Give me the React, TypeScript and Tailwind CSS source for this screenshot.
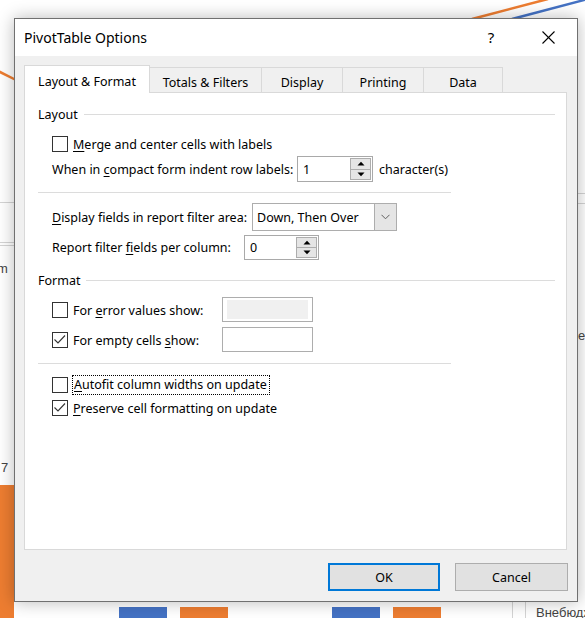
import React from "react";

const FONT = "font-['Noto_Sans',sans-serif]";

function U({ children }: { children: React.ReactNode }) {
  return <span className="underline decoration-1 underline-offset-[2px]">{children}</span>;
}

function Check({ checked }: { checked?: boolean }) {
  return (
    <div className="w-4 h-4 border border-[#333333] bg-white flex items-center justify-center shrink-0">
      {checked && (
        <svg width="14" height="14" viewBox="0 0 14 14">
          <polyline points="1.5,6.5 5,10 12,2.5" fill="none" stroke="#333333" strokeWidth="1.1" />
        </svg>
      )}
    </div>
  );
}

function Tri({ up }: { up?: boolean }) {
  return (
    <svg width="8" height="5" viewBox="0 0 8 5">
      {up ? <polygon points="0.5,4.5 4,0.8 7.5,4.5" fill="#000" /> : <polygon points="0.5,0.5 4,4.2 7.5,0.5" fill="#000" />}
    </svg>
  );
}

function SpinInput({ value, w, h }: { value: string; w: string; h: string }) {
  return (
    <div className={`${w} ${h} border border-[#a9a9a9] bg-white flex items-stretch`}>
      <div className="flex-1 flex items-center pl-[5px] pt-[2px]">{value}</div>
      <div className="w-[22px] flex flex-col py-px pr-px">
        <div className="flex-1 border border-[#adadad] bg-[#e5e5e5] flex items-center justify-center">
          <Tri up />
        </div>
        <div className="flex-1 border border-t-0 border-[#adadad] bg-[#e5e5e5] flex items-center justify-center">
          <Tri />
        </div>
      </div>
    </div>
  );
}

function SectionHeader({ label, mt }: { label: string; mt: string }) {
  return (
    <div className={`${mt} h-[18px] flex items-center`}>
      <span className="pt-[2px]">{label}</span>
      <div className="flex-1 h-px bg-[#dcdcdc] ml-[6px]" />
    </div>
  );
}

export default function App() {
  return (
    <div className={`relative w-[585px] h-[618px] overflow-hidden bg-white ${FONT} text-black`}>
      {/* Excel background fragments */}
      <svg className="absolute inset-0" width="585" height="618" viewBox="0 0 585 618">
        <line x1="472" y1="19" x2="548" y2="-1" stroke="#ed7d31" strokeWidth="2.5" />
        <line x1="512" y1="19" x2="588" y2="-1" stroke="#4472c4" strokeWidth="2.5" />
        <line x1="-2" y1="71" x2="16" y2="80" stroke="#ed7d31" strokeWidth="2.5" />
      </svg>
      <div className="absolute left-0 top-[202px] w-[14px] h-px bg-[#d4d4d4]" />
      <div className="absolute left-0 top-[242px] w-[14px] h-px bg-[#d4d4d4]" />
      <div className="absolute left-0 top-[245px] w-[14px] h-px bg-[#d4d4d4]" />
      <div className="absolute right-0 top-[193px] w-[8px] h-px bg-[#d4d4d4]" />
      <div className="absolute right-0 top-[203px] w-[8px] h-px bg-[#d4d4d4]" />
      <div className="absolute left-[-3px] top-[259px] text-[13px] text-[#444] font-['Liberation_Sans',sans-serif]">m</div>
      <div className="absolute left-[1px] top-[458px] text-[13px] text-[#444] font-['Liberation_Sans',sans-serif]">7</div>
      <div className="absolute left-[578px] top-[326px] text-[13px] text-[#444] font-['Liberation_Sans',sans-serif]">е</div>
      <div className="absolute left-0 top-[485px] w-[14px] h-[133px] bg-[#ed7d31]" />
      <div className="absolute left-[119px] top-[607px] w-[48px] h-[11px] bg-[#4472c4]" />
      <div className="absolute left-[180px] top-[607px] w-[48px] h-[11px] bg-[#ed7d31]" />
      <div className="absolute left-[332px] top-[607px] w-[48px] h-[11px] bg-[#4472c4]" />
      <div className="absolute left-[393px] top-[607px] w-[48px] h-[11px] bg-[#ed7d31]" />
      <div className="absolute left-[512px] top-[600px] w-px h-[18px] bg-[#d4d4d4]" />
      <div className="absolute left-[525px] top-[600px] w-px h-[18px] bg-[#d4d4d4]" />
      <div className="absolute left-[536px] top-[603px] text-[13px] text-[#444] font-['Liberation_Sans',sans-serif] whitespace-nowrap">Внебюджет</div>

      {/* Dialog */}
      <div className="absolute left-[14px] top-[18px] w-[564px] h-[584px] border border-[#707070] bg-[#f0f0f0] shadow-[0_0_16px_rgba(0,0,0,0.28)] flex flex-col">
        {/* Title bar */}
        <div className="h-[37px] bg-white flex items-center pl-[9px] pr-[6px]">
          <span className="text-[14px] flex-1">PivotTable Options</span>
          <div className="w-[46px] h-[30px] flex items-center justify-center text-[15px]">?</div>
          <div className="w-[46px] h-[30px] flex items-center justify-center ml-[11px]">
            <svg width="13" height="13" viewBox="0 0 13 13">
              <line x1="0.5" y1="0.5" x2="12.5" y2="12.5" stroke="#000" strokeWidth="1.1" />
              <line x1="12.5" y1="0.5" x2="0.5" y2="12.5" stroke="#000" strokeWidth="1.1" />
            </svg>
          </div>
        </div>

        {/* Body */}
        <div className="flex-1 flex flex-col pl-[9px] pr-[10px] pt-[9px] text-[12.5px]">
          {/* Tabs */}
          <div className="h-[27px] flex items-end">
            <div className="relative z-10 w-[126px] h-[28px] -mb-px bg-white border-l border-t border-r border-[#d9d9d9] flex items-center justify-center pt-[6px]">
              Layout &amp; Format
            </div>
            <div className="w-[112px] h-[25px] border-t border-r border-[#d9d9d9] flex items-center justify-center pt-[7px]">
              Totals &amp; Filters
            </div>
            <div className="w-[81px] h-[25px] border-t border-r border-[#d9d9d9] flex items-center justify-center pt-[7px]">
              Display
            </div>
            <div className="w-[81px] h-[25px] border-t border-r border-[#d9d9d9] flex items-center justify-center pt-[7px]">
              Printing
            </div>
            <div className="w-[79px] h-[25px] border-t border-r border-[#d9d9d9] flex items-center justify-center pt-[7px]">
              Data
            </div>
          </div>

          {/* Panel */}
          <div className="h-[458px] bg-white border border-[#d9d9d9] pl-[13px] pr-[11px] flex flex-col">
            <SectionHeader label="Layout" mt="mt-[12px]" />

            <div className="mt-[13px] h-4 pl-[14px] flex items-center gap-[5px]">
              <Check />
              <span className="pt-[2px]">
                <U>M</U>erge and center cells with labels
              </span>
            </div>

            <div className="mt-[4px] h-[26px] pl-[14px] flex items-center">
              <div className="w-[245px] pt-[2px]">
                When in <U>c</U>ompact form indent row labels:
              </div>
              <SpinInput value="1" w="w-[76px]" h="h-[26px]" />
              <span className="ml-[6px] pt-[2px]">character(s)</span>
            </div>

            <div className="mt-[10px] h-px w-[413px] bg-[#dcdcdc]" />

            <div className="mt-[10px] h-[28px] pl-[14px] flex items-center">
              <div className="w-[200px] pt-[2px]">
                <U>D</U>isplay fields in report filter area:
              </div>
              <div className="w-[145px] h-[28px] border border-[#adadad] bg-white flex items-stretch">
                <div className="flex-1 flex items-center pl-[4px] pt-[2px]">Down, Then Over</div>
                <div className="w-[22px] bg-[#e5e5e5] border-l border-[#adadad] flex items-center justify-center">
                  <svg width="9" height="6" viewBox="0 0 9 6">
                    <polyline points="0.5,0.8 4.5,4.8 8.5,0.8" fill="none" stroke="#606060" strokeWidth="1" />
                  </svg>
                </div>
              </div>
            </div>

            <div className="mt-[4px] h-[25px] pl-[14px] flex items-center">
              <div className="w-[192px] pt-[2px]">
                Report filter <U>f</U>ields per column:
              </div>
              <SpinInput value="0" w="w-[75px]" h="h-[25px]" />
            </div>

            <SectionHeader label="Format" mt="mt-[11px]" />

            <div className="mt-[8px] h-[25px] pl-[14px] flex items-center">
              <div className="w-[170px] flex items-center gap-[5px]">
                <Check />
                <span className="pt-[3px]">
                  For <U>e</U>rror values show:
                </span>
              </div>
              <div className="w-[91px] h-[25px] border border-[#adadad] bg-white px-[4px] py-[2px]">
                <div className="w-full h-full bg-[#f0f0f0]" />
              </div>
            </div>

            <div className="mt-[5px] h-[25px] pl-[14px] flex items-center">
              <div className="w-[170px] flex items-center gap-[5px]">
                <Check checked />
                <span className="pt-[3px]">
                  For empty cells <U>s</U>how:
                </span>
              </div>
              <div className="w-[91px] h-[25px] border border-[#adadad] bg-white" />
            </div>

            <div className="mt-[11px] h-px w-[413px] bg-[#dcdcdc]" />

            <div className="mt-[11px] h-[20px] pl-[14px] flex items-center gap-[4px]">
              <Check />
              <span className="h-[20px] border border-dotted border-black flex items-center pl-px pr-[2px]">
                <span className="pt-[1px]">
                  <U>A</U>utofit column widths on update
                </span>
              </span>
            </div>

            <div className="mt-[5px] h-4 pl-[14px] flex items-center gap-[5px]">
              <Check checked />
              <span className="pt-[3px]">
                <U>P</U>reserve cell formatting on update
              </span>
            </div>
          </div>

          {/* Buttons */}
          <div className="mt-[13px] flex justify-end gap-[15px] -mr-px">
            <div className="w-[112px] h-[28px] border-2 border-[#0078d7] bg-[#e1e1e1] flex items-center justify-center pt-[2px]">OK</div>
            <div className="w-[113px] h-[28px] border border-[#adadad] bg-[#e1e1e1] flex items-center justify-center pt-[2px]">Cancel</div>
          </div>
        </div>
      </div>
    </div>
  );
}
